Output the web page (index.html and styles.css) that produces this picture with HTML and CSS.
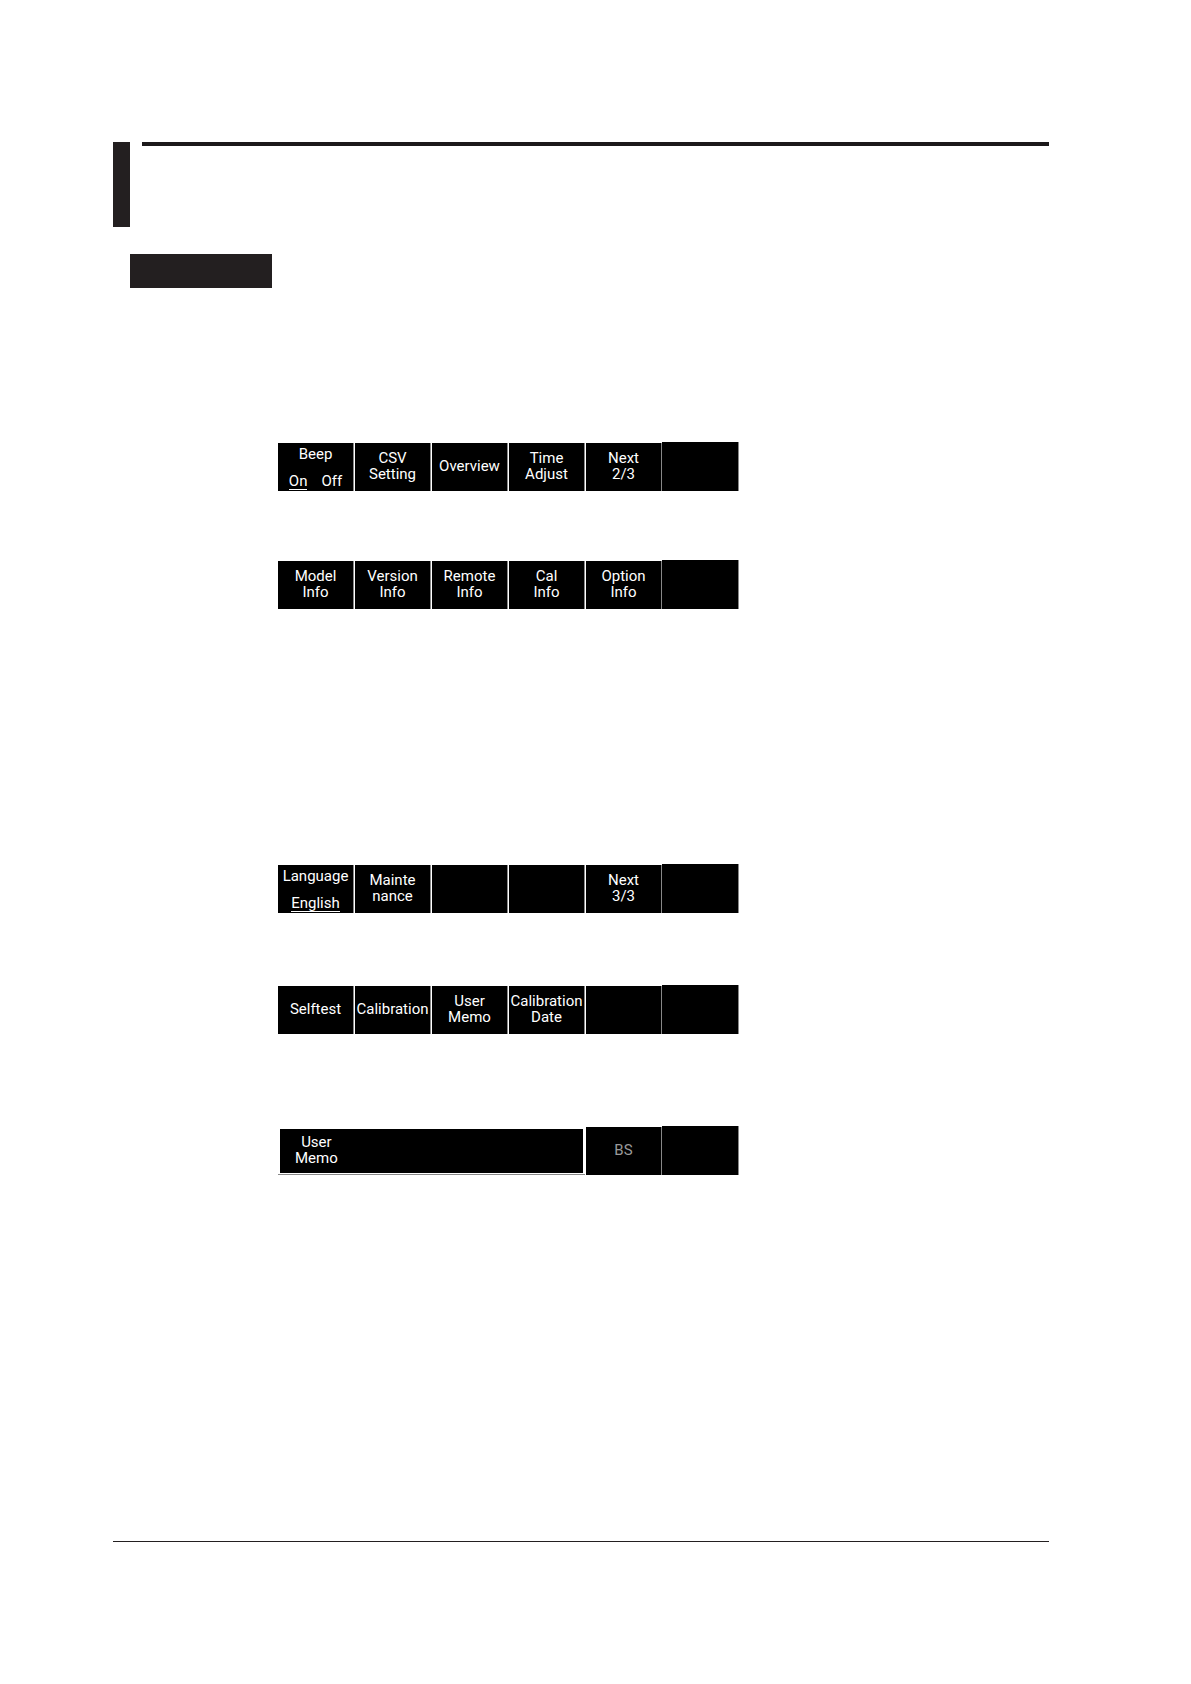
FILE: index.html
```
<!DOCTYPE html>
<html lang="en">
  <head>
    <meta charset="UTF-8" />
    <meta name="viewport" content="width=device-width, initial-scale=1.0" />
    <title>Soft Key Menus</title>
    <link rel="stylesheet" href="styles.css">
  </head>
  <body>
    <!-- Section heading -->
    <header class="section-head">
      <div class="section-mark"></div>
      <div class="section-rule"></div>
    </header>
    <div class="section-label"></div>

    <main class="menus">
      <!-- Page 2/3 -->
      <div class="softkeys softkeys-system">
        <button class="key key-select">
          <span>Beep</span>
          <span class="options"><span class="selected">On</span><span>Off</span></span>
        </button>
        <button class="key">CSV<br>Setting</button>
        <button class="key">Overview</button>
        <button class="key">Time<br>Adjust</button>
        <button class="key">Next<br>2/3</button>
        <div class="key"></div>
      </div>

      <!-- Overview -->
      <div class="softkeys softkeys-overview">
        <button class="key">Model<br>Info</button>
        <button class="key">Version<br>Info</button>
        <button class="key">Remote<br>Info</button>
        <button class="key">Cal<br>Info</button>
        <button class="key">Option<br>Info</button>
        <div class="key"></div>
      </div>

      <!-- Page 3/3 -->
      <div class="softkeys softkeys-language">
        <button class="key key-select">
          <span>Language</span>
          <span class="selected">English</span>
        </button>
        <button class="key">Mainte<br>nance</button>
        <div class="key"></div>
        <div class="key"></div>
        <button class="key">Next<br>3/3</button>
        <div class="key"></div>
      </div>

      <!-- Maintenance -->
      <div class="softkeys softkeys-maintenance">
        <button class="key">Selftest</button>
        <button class="key">Calibration</button>
        <button class="key">User<br>Memo</button>
        <button class="key">Calibration<br>Date</button>
        <div class="key"></div>
        <div class="key"></div>
      </div>

      <!-- User memo -->
      <div class="softkeys softkeys-memo">
        <div class="memo">
          <div class="memo-box">
            <label for="user-memo">User<br>Memo</label>
            <input type="text" id="user-memo" />
          </div>
        </div>
        <button class="key" disabled>BS</button>
        <div class="key"></div>
      </div>
    </main>

    <footer class="page-end"></footer>
  </body>
</html>
```

FILE: styles.css
```
* {
  box-sizing: border-box;
}
body {
  margin: 0;
  padding: 142px 142px 0 113px;
  background: #fff;
  font-family: Roboto, sans-serif;
}
/* Section heading */
.section-head {
  display: flex;
  gap: 12px;
}
.section-mark {
  width: 17px;
  height: 85px;
  background: #231f20;
}
.section-rule {
  flex: 1;
  height: 4px;
  background: #1c191a;
}
.section-label {
  width: 142px;
  height: 34px;
  margin: 27px 0 0 17px;
  background: #231f20;
}
/* Soft key bars */
.menus {
  max-width: 626px;
  padding: 154px 0 0 165px;
}
.softkeys {
  display: grid;
  grid-template-columns: 77fr 77fr 77fr 77fr 76fr 77fr;
}
.softkeys-system {
  margin-bottom: 69px;
}
.softkeys-overview {
  margin-bottom: 255px;
}
.softkeys-language {
  margin-bottom: 72px;
}
.softkeys-maintenance {
  margin-bottom: 92px;
}
.key {
  display: flex;
  justify-content: center;
  align-items: center;
  min-width: 0;
  min-height: 48px;
  margin: 1px 1px 0 0;
  padding: 0 0 2px;
  border: 0;
  border-right: 1px solid #888;
  background: #000;
  color: #fff;
  font-family: inherit;
  font-size: 15px;
  line-height: 16px;
  text-align: center;
  cursor: pointer;
}
.key:nth-last-child(2) {
  margin-right: 0;
}
.key:last-child {
  margin: 0;
}
.key:disabled {
  color: #999;
  cursor: default;
}
.key-select {
  flex-direction: column;
  justify-content: space-between;
  padding: 3px 0 1px;
}
.options {
  display: flex;
  gap: 14px;
}
.selected {
  border-bottom: 1px solid #fff;
}
/* User memo entry */
.memo {
  grid-column: span 4;
  margin: 1px 1px 0 0;
  padding: 2px 2px 1px;
  border-bottom: 1px solid #888;
}
.memo-box {
  display: flex;
  align-items: center;
  height: 100%;
  padding: 0 0 2px 15px;
  background: #000;
  color: #fff;
  font-size: 15px;
  line-height: 16px;
  text-align: center;
}
.memo-box input {
  flex: 1;
  min-width: 0;
  height: 32px;
  margin-left: 8px;
  border: 0;
  outline: 0;
  background: #000;
  color: #fff;
  font: inherit;
}
/* Bottom rule */
.page-end {
  margin-top: 366px;
  border-top: 1px solid #231f20;
}
```
